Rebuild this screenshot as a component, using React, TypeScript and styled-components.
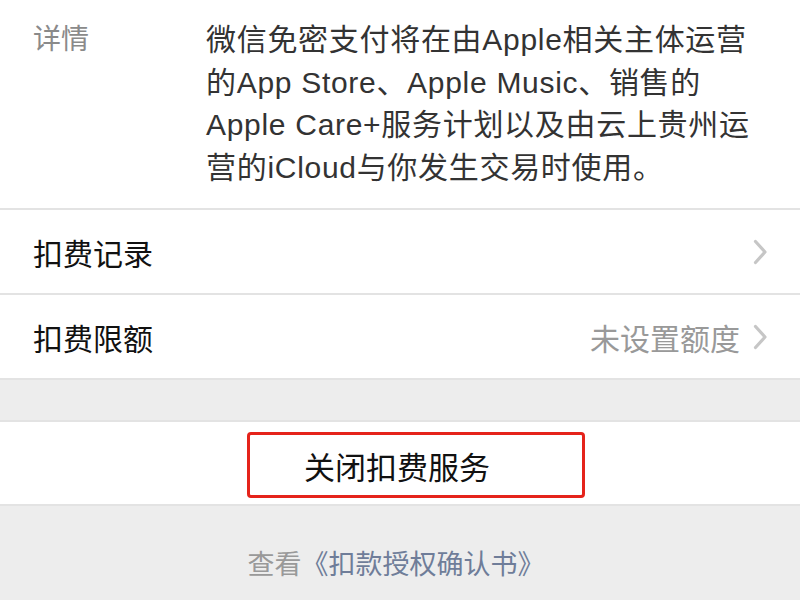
import styled, { createGlobalStyle } from "styled-components"

const GlobalStyle = createGlobalStyle`
	html, body {
		margin: 0;
		padding: 0;
		background: #ededed;
	}
	body {
		font-family: "Liberation Sans", "Noto Sans CJK SC", sans-serif;
	}
`

const Page = styled.div`
	width: 800px;
	height: 600px;
	overflow: hidden;
	background: #ededed;
	display: flex;
	flex-direction: column;
`

const Section = styled.div`
	background: #ffffff;
	border-bottom: 2px solid #e3e3e3;
`

const DetailRow = styled.div`
	display: grid;
	grid-template-columns: 173px 1fr;
	padding: 19px 0 20px 33px;
	height: 208px;
	box-sizing: border-box;
`

const DetailLabel = styled.div`
	font-size: 28px;
	line-height: 42px;
	color: #8a8a8a;
`

const DetailText = styled.div`
	font-size: 30px;
	line-height: 42.5px;
	color: #333333;
	white-space: nowrap;
	letter-spacing: 0.7px;
`

const Row = styled.div`
	height: 85px;
	display: flex;
	align-items: center;
	padding: 0 31px 0 33px;
	border-top: 2px solid #e3e3e3;
	box-sizing: border-box;
`

const RowTitle = styled.div`
	font-size: 30px;
	color: #111111;
	flex: 1;
`

const RowValue = styled.div`
	font-size: 30px;
	color: #999999;
	margin-right: 12px;
`

const Chevron = styled.svg`
	width: 17px;
	height: 28px;
	display: block;
`

const Spacer = styled.div`
	height: 40px;
`

const ButtonSection = styled.div`
	background: #ffffff;
	border-top: 2px solid #e3e3e3;
	border-bottom: 2px solid #e3e3e3;
	height: 86px;
	box-sizing: border-box;
	display: flex;
	align-items: center;
	justify-content: center;
`

const CloseButton = styled.div`
	width: 338px;
	height: 66px;
	margin: 4px 0 0 32px;
	box-sizing: border-box;
	border: 3px solid #e5231b;
	border-radius: 4px;
	display: flex;
	align-items: center;
	justify-content: center;
	font-size: 31px;
	color: #111111;
	padding-right: 38px;
`

const Footer = styled.div`
	text-align: center;
	padding-top: 37px;
	font-size: 27px;
	padding-right: 8px;
	color: #999999;
`

const Link = styled.span`
	color: #6f7d99;
`

function ArrowRight() {
	return (
		<Chevron viewBox="0 0 17 28">
			<path d="M3.5 3.5 L13 14 L3.5 24.5" fill="none" stroke="#c6c6c6" strokeWidth="3.2" strokeLinecap="round" strokeLinejoin="round" />
		</Chevron>
	)
}

export default function App() {
	return (
		<Page>
			<GlobalStyle />
			<Section>
				<DetailRow>
					<DetailLabel>详情</DetailLabel>
					<DetailText>
						微信免密支付将在由Apple相关主体运营
						<br />
						的App Store、Apple Music、销售的
						<br />
						Apple Care+服务计划以及由云上贵州运
						<br />
						营的iCloud与你发生交易时使用。
					</DetailText>
				</DetailRow>
				<Row>
					<RowTitle>扣费记录</RowTitle>
					<ArrowRight />
				</Row>
				<Row>
					<RowTitle>扣费限额</RowTitle>
					<RowValue>未设置额度</RowValue>
					<ArrowRight />
				</Row>
			</Section>
			<Spacer />
			<ButtonSection>
				<CloseButton>关闭扣费服务</CloseButton>
			</ButtonSection>
			<Footer>
				查看<Link>《扣款授权确认书》</Link>
			</Footer>
		</Page>
	)
}
